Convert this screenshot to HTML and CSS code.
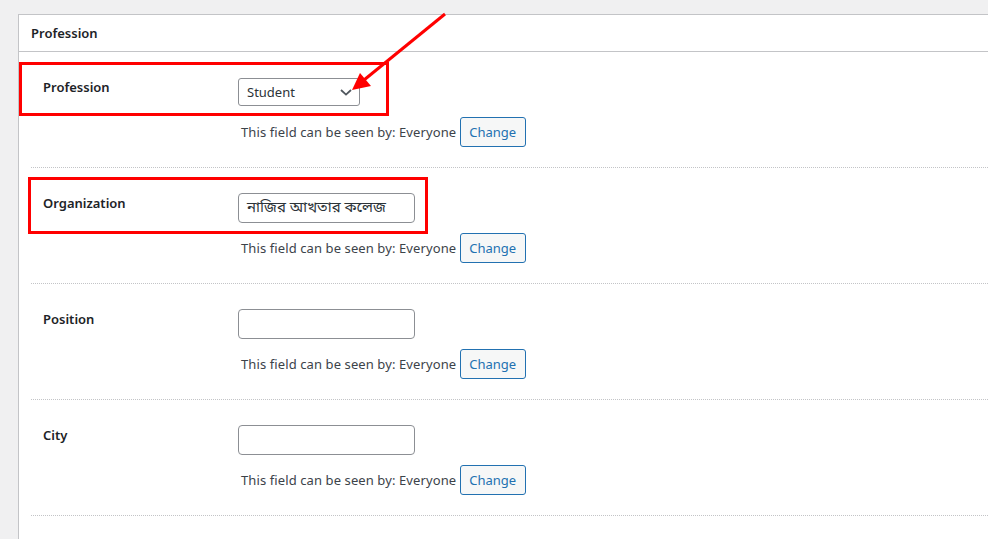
FILE: index.html
```html
<!DOCTYPE html>
<html lang="en">
<head>
<meta charset="utf-8">
<title>Profession</title>
<link rel="stylesheet" href="styles.css">
</head>
<body>
<div class="page">
  <section class="panel">
    <h2 class="panel-title">Profession</h2>
    <div class="rows">
      <div class="row">
        <div class="label">Profession</div>
        <div class="field">
          <div class="slot">
            <div class="select">
              <span>Student</span>
              <svg class="chev" width="12" height="7" viewBox="0 0 12 7"><path d="M1 1 L6 5.6 L11 1" fill="none" stroke="#50575e" stroke-width="1.8"/></svg>
            </div>
          </div>
          <div class="visibility">
            <span class="vis-text">This field can be seen by: Everyone</span>
            <span class="button">Change</span>
          </div>
        </div>
      </div>
      <div class="row">
        <div class="label">Organization</div>
        <div class="field">
          <div class="slot">
            <div class="input bn">নাজির আখতার কলেজ</div>
          </div>
          <div class="visibility">
            <span class="vis-text">This field can be seen by: Everyone</span>
            <span class="button">Change</span>
          </div>
        </div>
      </div>
      <div class="row">
        <div class="label">Position</div>
        <div class="field">
          <div class="slot">
            <div class="input"></div>
          </div>
          <div class="visibility">
            <span class="vis-text">This field can be seen by: Everyone</span>
            <span class="button">Change</span>
          </div>
        </div>
      </div>
      <div class="row">
        <div class="label">City</div>
        <div class="field">
          <div class="slot">
            <div class="input"></div>
          </div>
          <div class="visibility">
            <span class="vis-text">This field can be seen by: Everyone</span>
            <span class="button">Change</span>
          </div>
        </div>
      </div>
    </div>
  </section>
  <div class="mark mark-1"></div>
  <div class="mark mark-2"></div>
  <svg class="arrow" width="988" height="539" viewBox="0 0 988 539">
    <line x1="445" y1="14" x2="364" y2="80" stroke="#f00" stroke-width="3"/>
    <polygon points="352,90 360,73 371,86" fill="#f00"/>
  </svg>
</div>
</body>
</html>
```
FILE: styles.css
```css
html, body {
  margin: 0;
  padding: 0;
}
body {
  background: #f0f0f1;
  font-family: "Noto Sans", "Liberation Sans", sans-serif;
  font-size: 13px;
  color: #3c434a;
  overflow: hidden;
  width: 988px;
  height: 539px;
}
.page {
  position: relative;
  width: 988px;
  height: 539px;
  padding-top: 14px;
  box-sizing: border-box;
  overflow: hidden;
}
.panel {
  margin-left: 18px;
  width: 970px;
  box-sizing: border-box;
  background: #fff;
  border: 1px solid #c3c4c7;
  border-right: none;
  border-bottom: none;
  height: 525px;
}
.panel-title {
  margin: 0;
  height: 36px;
  line-height: 36px;
  padding: 0 12px;
  font-size: 13px;
  font-weight: 600;
  color: #1d2327;
  border-bottom: 1px solid #c3c4c7;
}
.rows {
  margin-left: 12px;
}
.row {
  display: flex;
  height: 115px;
  border-bottom: 1px dotted #c3c4c7;
}
.label {
  width: 195px;
  padding-left: 12px;
  padding-top: 25px;
  line-height: 20px;
  font-size: 13px;
  font-weight: 600;
  color: #1d2327;
}
.field {
  padding-top: 25px;
  display: flex;
  flex-direction: column;
}
.slot {
  height: 30px;
  display: flex;
  align-items: center;
}
.select {
  width: 122px;
  height: 28px;
  box-sizing: border-box;
  border: 1px solid #8c8f94;
  border-radius: 3px;
  display: flex;
  align-items: center;
  justify-content: space-between;
  padding: 0 7px 0 8px;
  color: #2c3338;
  font-size: 13px;
}
.chev {
  display: block;
  margin-top: 1px;
}
.input {
  width: 177px;
  height: 30px;
  box-sizing: border-box;
  border: 1px solid #8c8f94;
  border-radius: 4px;
  padding: 0 8px;
  line-height: 28px;
  color: #2c3338;
}
.bn {
  font-size: 15px;
  font-family: "Noto Sans Bengali", "Lohit Bengali", "FreeSerif", "Noto Sans", sans-serif;
  white-space: nowrap;
  overflow: hidden;
}
.visibility {
  margin-top: 10px;
  display: flex;
  align-items: center;
  height: 30px;
}
.vis-text {
  margin-left: 3px;
  margin-right: 4px;
  white-space: nowrap;
  letter-spacing: 0.1px;
}
.button {
  display: inline-flex;
  align-items: center;
  height: 30px;
  box-sizing: border-box;
  padding: 0 9px 0 8px;
  border: 1px solid #2271b1;
  border-radius: 3px;
  background: #f6f7f7;
  color: #2271b1;
  font-size: 13px;
}
.mark {
  position: absolute;
  border: 3px solid #f00;
  box-sizing: border-box;
}
.mark-1 {
  left: 19px;
  top: 62px;
  width: 370px;
  height: 54px;
}
.mark-2 {
  left: 28px;
  top: 177px;
  width: 400px;
  height: 57px;
}
.arrow {
  position: absolute;
  left: 0;
  top: 0;
  pointer-events: none;
}
```
